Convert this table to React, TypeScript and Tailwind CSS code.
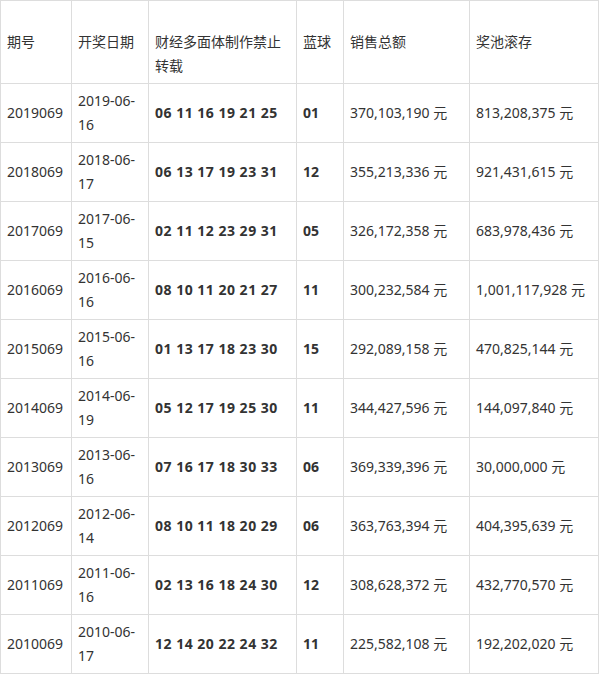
import React from "react";

const rows = [
  { issue: "2019069", date: "2019-06-16", reds: "06 11 16 19 21 25", blue: "01", sales: "370,103,190 元", pool: "813,208,375 元" },
  { issue: "2018069", date: "2018-06-17", reds: "06 13 17 19 23 31", blue: "12", sales: "355,213,336 元", pool: "921,431,615 元" },
  { issue: "2017069", date: "2017-06-15", reds: "02 11 12 23 29 31", blue: "05", sales: "326,172,358 元", pool: "683,978,436 元" },
  { issue: "2016069", date: "2016-06-16", reds: "08 10 11 20 21 27", blue: "11", sales: "300,232,584 元", pool: "1,001,117,928 元" },
  { issue: "2015069", date: "2015-06-16", reds: "01 13 17 18 23 30", blue: "15", sales: "292,089,158 元", pool: "470,825,144 元" },
  { issue: "2014069", date: "2014-06-19", reds: "05 12 17 19 25 30", blue: "11", sales: "344,427,596 元", pool: "144,097,840 元" },
  { issue: "2013069", date: "2013-06-16", reds: "07 16 17 18 30 33", blue: "06", sales: "369,339,396 元", pool: "30,000,000 元" },
  { issue: "2012069", date: "2012-06-14", reds: "08 10 11 18 20 29", blue: "06", sales: "363,763,394 元", pool: "404,395,639 元" },
  { issue: "2011069", date: "2011-06-16", reds: "02 13 16 18 24 30", blue: "12", sales: "308,628,372 元", pool: "432,770,570 元" },
  { issue: "2010069", date: "2010-06-17", reds: "12 14 20 22 24 32", blue: "11", sales: "225,582,108 元", pool: "192,202,020 元" },
];

const headers = ["期号", "开奖日期", "财经多面体制作禁止转载", "蓝球", "销售总额", "奖池滚存"];

export default function App() {
  return (
    <div
      className="bg-white text-[#333] text-[14px] leading-[24px]"
      style={{ fontFamily: '"Noto Sans", "Noto Sans CJK SC", sans-serif' }}
    >
      <table className="table-fixed border-collapse w-[598px]">
        <colgroup>
          <col className="w-[71px]" />
          <col className="w-[77px]" />
          <col className="w-[148px]" />
          <col className="w-[47px]" />
          <col className="w-[126px]" />
          <col className="w-[129px]" />
        </colgroup>
        <thead>
          <tr>
            {headers.map((h) => (
              <th
                key={h}
                className="border border-[#ddd] px-[6px] pt-[29px] pb-[5px] text-left align-top font-normal"
              >
                {h}
              </th>
            ))}
          </tr>
        </thead>
        <tbody>
          {rows.map((r) => (
            <tr key={r.issue}>
              <td className="border border-[#ddd] px-[6px] py-[5px] align-middle">{r.issue}</td>
              <td className="border border-[#ddd] px-[6px] py-[5px] align-middle">{r.date}</td>
              <td className="border border-[#ddd] px-[6px] py-[5px] align-middle font-bold tracking-[0.5px] whitespace-nowrap">
                {r.reds}
              </td>
              <td className="border border-[#ddd] px-[6px] py-[5px] align-middle font-bold">{r.blue}</td>
              <td className="border border-[#ddd] px-[6px] py-[5px] align-middle whitespace-nowrap">{r.sales}</td>
              <td className="border border-[#ddd] px-[6px] py-[5px] align-middle whitespace-nowrap">{r.pool}</td>
            </tr>
          ))}
        </tbody>
      </table>
    </div>
  );
}
